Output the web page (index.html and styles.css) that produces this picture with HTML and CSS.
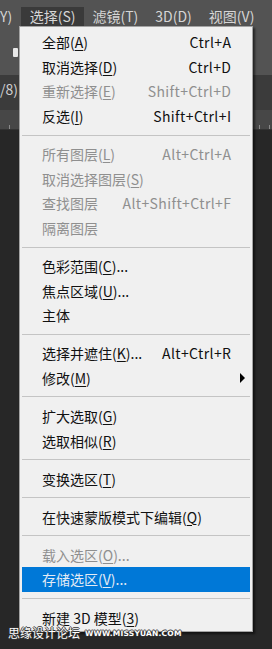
FILE: index.html
```html
<!DOCTYPE html>
<html lang="zh-CN">
<head>
<meta charset="utf-8">
<title>选择菜单</title>
<link rel="stylesheet" href="styles.css">
</head>
<body>
<div class="app">
  <div class="menubar">
    <span class="mb-item mb-clip">Y)</span>
    <span class="mb-item mb-active">选择(S)</span>
    <span class="mb-item">滤镜(T)</span>
    <span class="mb-item">3D(D)</span>
    <span class="mb-item">视图(V)</span>
  </div>
  <div class="optionsbar"><span class="opt-icon"></span></div>
  <div class="tabrow"><span class="tab-title">/8)</span></div>
  <div class="ruler"></div>
  <div class="canvas"></div>

  <div class="menu">
    <div class="mi"><span class="lb">全部(<u>A</u>)</span><span class="sc">Ctrl+A</span></div>
    <div class="mi"><span class="lb">取消选择(<u>D</u>)</span><span class="sc">Ctrl+D</span></div>
    <div class="mi dis"><span class="lb">重新选择(<u>E</u>)</span><span class="sc">Shift+Ctrl+D</span></div>
    <div class="mi"><span class="lb">反选(<u>I</u>)</span><span class="sc">Shift+Ctrl+I</span></div>
    <div class="sep"></div>
    <div class="mi dis"><span class="lb">所有图层(<u>L</u>)</span><span class="sc">Alt+Ctrl+A</span></div>
    <div class="mi dis"><span class="lb">取消选择图层(<u>S</u>)</span></div>
    <div class="mi dis"><span class="lb">查找图层</span><span class="sc">Alt+Shift+Ctrl+F</span></div>
    <div class="mi dis"><span class="lb">隔离图层</span></div>
    <div class="sep"></div>
    <div class="mi"><span class="lb">色彩范围(<u>C</u>)...</span></div>
    <div class="mi"><span class="lb">焦点区域(<u>U</u>)...</span></div>
    <div class="mi"><span class="lb">主体</span></div>
    <div class="sep"></div>
    <div class="mi"><span class="lb">选择并遮住(<u>K</u>)...</span><span class="sc">Alt+Ctrl+R</span></div>
    <div class="mi"><span class="lb">修改(<u>M</u>)</span><span class="arrow"></span></div>
    <div class="sep"></div>
    <div class="mi"><span class="lb">扩大选取(<u>G</u>)</span></div>
    <div class="mi"><span class="lb">选取相似(<u>R</u>)</span></div>
    <div class="sep"></div>
    <div class="mi"><span class="lb">变换选区(<u>T</u>)</span></div>
    <div class="sep"></div>
    <div class="mi"><span class="lb">在快速蒙版模式下编辑(<u>Q</u>)</span></div>
    <div class="sep"></div>
    <div class="mi dis"><span class="lb">载入选区(<u>O</u>)...</span></div>
    <div class="mi hl"><span class="lb">存储选区(<u>V</u>)...</span></div>
    <div class="sep"></div>
    <div class="mi"><span class="lb">新建 3D 模型(<u>3</u>)</span></div>
  </div>

  <div class="watermark"><span class="wm-cn">思缘设计论坛</span><span class="wm-url">WWW.MISSYUAN.COM</span></div>
</div>
</body>
</html>
```
FILE: styles.css
```css
* { box-sizing: border-box; }
html, body { margin: 0; padding: 0; }
body {
  width: 272px;
  height: 649px;
  overflow: hidden;
  background: #282828;
  font-family: "Noto Sans CJK SC", "Noto Sans", sans-serif;
}
.app {
  position: relative;
  width: 272px;
  height: 649px;
  overflow: hidden;
}
.menubar {
  height: 26px;
  background: #535353;
  display: flex;
  align-items: flex-end;
  white-space: nowrap;
}
.mb-item {
  height: 19px;
  line-height: 19px;
  padding: 0 8.5px;
  font-size: 14px;
  color: #d6d6d6;
}
.mb-clip { padding: 0 9px 0 0; }
.mb-active { background: #3a3a3a; }
.optionsbar {
  height: 49px;
  background: #535353;
  position: relative;
}
.opt-icon {
  position: absolute;
  left: 13px;
  top: 22px;
  width: 5px;
  height: 9px;
  background: #e8e8e8;
  border-radius: 1px;
}
.tabrow {
  height: 35px;
  background: #3b3b3b;
  padding-top: 4px;
}
.tab-title {
  display: block;
  font-size: 14px;
  color: #cfcfcf;
  line-height: 20px;
}
.ruler {
  height: 20px;
  background: #474747;
  background-image: repeating-linear-gradient(90deg, transparent 0 9px, #8a8a8a 9px 10px);
  background-size: 100% 4px;
  background-repeat: no-repeat;
  background-position: 0 100%;
  border-bottom: 1px solid #333;
}
.canvas { height: 500px; background: #272727; }

.menu {
  position: absolute;
  left: 19px;
  top: 26px;
  width: 234px;
  height: 606px;
  background: #f0f0f0;
  border: 1px solid #a3a3a3;
  box-shadow: 2px 2px 2px rgba(0,0,0,0.55);
  padding: 3px 2px 1px;
  font-size: 14px;
  color: #111;
}
.mi {
  height: 24.6px;
  display: grid;
  grid-template-columns: 1fr auto 19px;
  align-items: center;
  padding-left: 20px;
  white-space: nowrap;
}
.mi u { text-decoration-thickness: 1px; text-underline-offset: 2px; }
.sc { grid-column: 2; letter-spacing: 0.4px; margin-right: -0.4px; }
.arrow {
  grid-column: 3;
  justify-self: start;
  margin-left: 9px;
  width: 0;
  height: 0;
  border-top: 5px solid transparent;
  border-bottom: 5px solid transparent;
  border-left: 5px solid #000;
}
.dis { color: #8f8f8f; }
.hl { background: #0078d7; color: #e3ebf5; }
.sep {
  height: 13.5px;
  display: flex;
  align-items: center;
}
.sep::before {
  content: "";
  display: block;
  width: 100%;
  height: 1px;
  background: #c4c4c4;
}

.watermark {
  position: absolute;
  left: 8px;
  top: 627px;
  display: flex;
  align-items: center;
  gap: 5px;
  line-height: 12px;
  color: #fff;
  text-shadow: 1px 0 0 #333, -1px 0 0 #333, 0 1px 0 #333, 0 -1px 0 #333;
}
.wm-cn { font-size: 12px; line-height: 12px; }
.wm-url { font-family: "DejaVu Sans", sans-serif; font-size: 7.5px; font-weight: bold; letter-spacing: 0.2px; line-height: 9px; }
```
